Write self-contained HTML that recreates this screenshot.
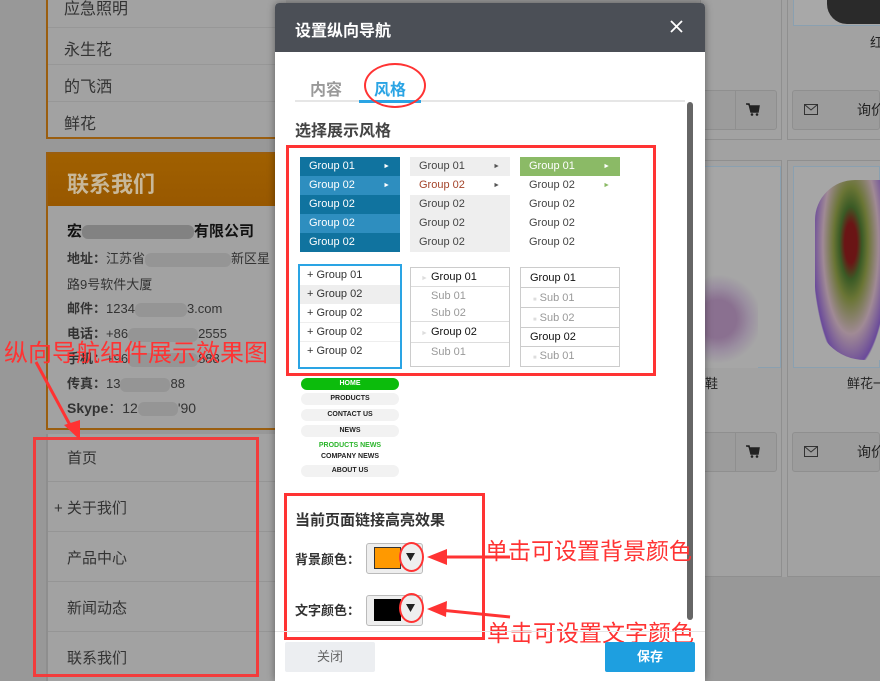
<!DOCTYPE html>
<html><head><meta charset="utf-8"><style>
*{margin:0;padding:0;box-sizing:border-box}
body{width:880px;height:681px;overflow:hidden;position:relative;background:#989898;font-family:"Liberation Sans","Noto Sans CJK SC",sans-serif;}
.a{position:absolute}
.t{position:absolute;white-space:nowrap}
.g{font-size:11px;color:#fff;height:19px;line-height:19px;padding-left:9px;position:relative}
.g i{position:absolute;right:10px;top:0;font-style:normal;font-size:7px}
</style></head><body>
<!-- left background -->
<div class="a" style="left:46px;top:0;width:240px;height:139px;background:#a2a2a2;border-left:2px solid #9a5e10;border-bottom:2px solid #9a5e10"></div>
<div class="a" style="left:48px;top:27px;width:240px;border-top:1px solid #979797"></div>
<div class="a" style="left:48px;top:64px;width:240px;border-top:1px solid #979797"></div>
<div class="a" style="left:48px;top:101px;width:240px;border-top:1px solid #979797"></div>
<div class="t" style="left:64px;top:0;font-size:16px;color:#333;line-height:20px">应急照明</div>
<div class="t" style="left:64px;top:36px;font-size:16px;color:#333">永生花</div>
<div class="t" style="left:64px;top:73px;font-size:16px;color:#333">的飞洒</div>
<div class="t" style="left:64px;top:110px;font-size:16px;color:#333">鲜花</div>

<div class="a" style="left:46px;top:152px;width:240px;height:278px;background:#a2a2a2;border:2px solid #9a5e10;border-right:none"></div>
<div class="a" style="left:48px;top:154px;width:238px;height:52px;background:linear-gradient(#a06000,#985800)"></div>
<div class="t" style="left:67px;top:167px;font-size:22px;color:#c8b89a;font-weight:bold">联系我们</div>
<div class="t" style="left:67px;top:220px;font-size:15px;color:#111;font-weight:bold">宏<span style="display:inline-block;width:112px;height:14px;background:#828282;border-radius:6px;vertical-align:middle"></span>有限公司</div>
<div class="t" style="left:67px;top:248px;font-size:13px;color:#333"><b>地址：</b>江苏省<span style="display:inline-block;width:86px;height:14px;background:#959595;border-radius:6px;vertical-align:middle"></span>新区星</div>
<div class="t" style="left:67px;top:274px;font-size:13px;color:#333">路9号软件大厦</div>
<div class="t" style="left:67px;top:298px;font-size:13px;color:#333"><b>邮件：</b>1234<span style="display:inline-block;width:52px;height:14px;background:#959595;border-radius:6px;vertical-align:middle"></span>3.com</div>
<div class="t" style="left:67px;top:323px;font-size:13px;color:#333"><b>电话：</b>+86<span style="display:inline-block;width:70px;height:14px;background:#959595;border-radius:6px;vertical-align:middle"></span>2555</div>
<div class="t" style="left:67px;top:348px;font-size:13px;color:#333"><b>手机：</b>+96<span style="display:inline-block;width:70px;height:14px;background:#959595;border-radius:6px;vertical-align:middle"></span>888</div>
<div class="t" style="left:67px;top:373px;font-size:13px;color:#333"><b>传真：</b>13<span style="display:inline-block;width:50px;height:14px;background:#959595;border-radius:6px;vertical-align:middle"></span>88</div>
<div class="t" style="left:67px;top:398px;font-size:14px;color:#333"><b>Skype</b>：12<span style="display:inline-block;width:40px;height:14px;background:#959595;border-radius:6px;vertical-align:middle"></span>'90</div>

<div class="a" style="left:46px;top:434px;width:240px;height:247px;background:#a2a2a2;border-left:2px solid #8e8e8e"></div>
<div class="a" style="left:48px;top:481px;width:240px;border-top:1px solid #959595"></div>
<div class="a" style="left:48px;top:531px;width:240px;border-top:1px solid #959595"></div>
<div class="a" style="left:48px;top:581px;width:240px;border-top:1px solid #959595"></div>
<div class="a" style="left:48px;top:631px;width:240px;border-top:1px solid #959595"></div>
<div class="t" style="left:67px;top:447px;font-size:15px;color:#333">首页</div>
<div class="t" style="left:54px;top:497px;font-size:15px;color:#333">+ 关于我们</div>
<div class="t" style="left:67px;top:547px;font-size:15px;color:#333">产品中心</div>
<div class="t" style="left:67px;top:597px;font-size:15px;color:#333">新闻动态</div>
<div class="t" style="left:67px;top:647px;font-size:15px;color:#333">联系我们</div>
<div class="a" style="left:33px;top:437px;width:226px;height:240px;border:3px solid #f23c3c"></div>

<!-- right background -->
<div class="a" style="left:700px;top:0;width:180px;height:577px;background:#a2a2a2"></div>
<div class="a" style="left:700px;top:0;width:82px;height:140px;border:1px solid #8f8f8f;border-top:none"></div>
<div class="a" style="left:787px;top:0;width:93px;height:140px;border:1px solid #8f8f8f;border-top:none;border-right:none"></div>
<div class="a" style="left:793px;top:0;width:87px;height:26px;border:1px solid #8aa0b0;border-top:none;border-right:none;background:#a8a8a8"></div>
<div class="a" style="left:827px;top:0;width:53px;height:24px;background:#2a2a2a;border-radius:0 0 0 20px"></div>
<div class="a" style="left:700px;top:90px;width:77px;height:40px;border:1px solid #8f8f8f;border-radius:3px;background:#9c9c9c"></div>
<div class="a" style="left:735px;top:90px;border-left:1px solid #8f8f8f;height:40px"></div>
<svg class="a" style="left:746px;top:103px" width="14" height="13"><path d="M0 1H3L5 9H12L13 3H4" fill="#222" stroke="#222" stroke-width="1.5"/><circle cx="6" cy="11.5" r="1.3" fill="#222"/><circle cx="11" cy="11.5" r="1.3" fill="#222"/></svg>
<div class="a" style="left:792px;top:90px;width:88px;height:40px;border:1px solid #8f8f8f;border-radius:3px;background:#9c9c9c"></div>
<svg class="a" style="left:804px;top:104px" width="14" height="11"><rect x="0.5" y="0.5" width="13" height="10" fill="none" stroke="#333"/><path d="M0.5 0.5L7 6L13.5 0.5" fill="none" stroke="#333"/></svg>
<div class="t" style="left:857px;top:100px;font-size:14px;color:#222">询价</div>
<div class="t" style="left:870px;top:32px;font-size:13px;color:#222">红</div>
<div class="a" style="left:700px;top:160px;width:82px;height:417px;border:1px solid #8f8f8f"></div>
<div class="a" style="left:787px;top:160px;width:93px;height:417px;border:1px solid #8f8f8f;border-right:none"></div>
<div class="a" style="left:700px;top:166px;width:81px;height:202px;border:1px solid #8aa0b0;background:#a6a6a6"></div>
<div class="a" style="left:793px;top:166px;width:87px;height:202px;border:1px solid #8aa0b0;background:#a6a6a6"></div>
<div class="a" style="left:815px;top:180px;width:65px;height:180px;border-radius:40px 0 0 50px;background:radial-gradient(ellipse at 55% 35%,#6a1515 0 12%,#3a5a25 22%,#6a7535 34%,#a08a95 55%,#6a4a9a 75%,#a6a6a6 77%)"></div>
<div class="a" style="left:700px;top:270px;width:58px;height:98px;border-radius:30px 40px 0 0;background:radial-gradient(circle at 30% 50%,#8a7090 0 30%,#9a8ea0 50%,#a6a6a6 70%)"></div>
<div class="t" style="left:705px;top:373px;font-size:13px;color:#222">鞋</div>
<div class="t" style="left:847px;top:373px;font-size:13px;color:#222">鲜花一</div>
<div class="a" style="left:700px;top:432px;width:77px;height:40px;border:1px solid #8f8f8f;border-radius:3px;background:#9c9c9c"></div>
<div class="a" style="left:735px;top:432px;border-left:1px solid #8f8f8f;height:40px"></div>
<svg class="a" style="left:746px;top:445px" width="14" height="13"><path d="M0 1H3L5 9H12L13 3H4" fill="#222" stroke="#222" stroke-width="1.5"/><circle cx="6" cy="11.5" r="1.3" fill="#222"/><circle cx="11" cy="11.5" r="1.3" fill="#222"/></svg>
<div class="a" style="left:792px;top:432px;width:88px;height:40px;border:1px solid #8f8f8f;border-radius:3px;background:#9c9c9c"></div>
<svg class="a" style="left:804px;top:446px" width="14" height="11"><rect x="0.5" y="0.5" width="13" height="10" fill="none" stroke="#333"/><path d="M0.5 0.5L7 6L13.5 0.5" fill="none" stroke="#333"/></svg>
<div class="t" style="left:857px;top:442px;font-size:14px;color:#222">询价</div>

<!-- red annotation left -->
<div class="t" style="left:4px;top:333px;font-size:24px;color:#f33">纵向导航组件展示效果图</div>
<svg class="a" style="left:0;top:0" width="880" height="681"><line x1="36" y1="362" x2="70" y2="425" stroke="#f33" stroke-width="3"/><polygon points="64,425 80,440 80,420" fill="#f33"/></svg>

<!-- modal -->
<div class="a" style="left:275px;top:3px;width:430px;height:678px;background:#fff;border-radius:4px 4px 0 0;box-shadow:0 0 8px rgba(0,0,0,.4)"></div>
<div class="a" style="left:275px;top:3px;width:430px;height:49px;background:#4b4f56;border-radius:4px 4px 0 0"></div>
<div class="t" style="left:295px;top:17px;font-size:16px;color:#fff;font-weight:bold">设置纵向导航</div>
<svg class="a" style="left:670px;top:20px" width="13" height="13"><path d="M1 1L12 12M12 1L1 12" stroke="#fff" stroke-width="1.8"/></svg>
<div class="t" style="left:310px;top:76px;font-size:16px;color:#999;font-weight:bold">内容</div>
<div class="t" style="left:374px;top:76px;font-size:16px;color:#2aa4e4;font-weight:bold">风格</div>
<div class="a" style="left:295px;top:100px;width:390px;border-top:2px solid #e6e6e6"></div>
<div class="a" style="left:359px;top:100px;width:62px;border-top:3px solid #2aa4e4"></div>
<div class="a" style="left:364px;top:63px;width:62px;height:45px;border:2px solid #f33;border-radius:50%"></div>
<div class="a" style="left:687px;top:102px;width:6px;height:518px;background:#666;border-radius:3px"></div>
<div class="t" style="left:295px;top:117px;font-size:16px;color:#444;font-weight:bold">选择展示风格</div>
<div class="a" style="left:286px;top:145px;width:370px;height:231px;border:3px solid #f33"></div>

<div class="a" style="left:300px;top:157px;width:100px">
<div class="g" style="background:#10739f">Group 01<i>►</i></div>
<div class="g" style="background:#2e8ebf">Group 02<i>►</i></div>
<div class="g" style="background:#10739f">Group 02</div>
<div class="g" style="background:#2e8ebf">Group 02</div>
<div class="g" style="background:#10739f">Group 02</div></div>
<div class="a" style="left:410px;top:157px;width:100px">
<div class="g" style="background:#eee;color:#444">Group 01<i style="color:#555">►</i></div>
<div class="g" style="background:#fff;color:#a4442a">Group 02<i style="color:#555">►</i></div>
<div class="g" style="background:#eee;color:#444">Group 02</div>
<div class="g" style="background:#eee;color:#444">Group 02</div>
<div class="g" style="background:#eee;color:#444">Group 02</div></div>
<div class="a" style="left:520px;top:157px;width:100px">
<div class="g" style="background:#8bba66">Group 01<i>►</i></div>
<div class="g" style="color:#444">Group 02<i style="color:#8bba66">►</i></div>
<div class="g" style="color:#444">Group 02</div>
<div class="g" style="color:#444">Group 02</div>
<div class="g" style="color:#444">Group 02</div></div>

<div class="a" style="left:298px;top:264px;width:104px;height:105px;border:2px solid #2aa4e4">
<div class="g" style="color:#333;padding-left:7px">+ Group 01</div>
<div class="g" style="color:#333;padding-left:7px;background:#eee">+ Group 02</div>
<div class="g" style="color:#333;padding-left:7px;border-bottom:1px solid #eee">+ Group 02</div>
<div class="g" style="color:#333;padding-left:7px;border-bottom:1px solid #eee">+ Group 02</div>
<div class="g" style="color:#333;padding-left:7px">+ Group 02</div></div>
<div class="a" style="left:410px;top:267px;width:100px;height:100px;border:1px solid #ccc;font-size:11px">
<div style="height:19px;line-height:19px;padding-left:10px;color:#111;border-bottom:1px solid #ddd"><span style="color:#ddd;font-size:7px">►</span> Group 01</div>
<div style="height:17px;line-height:17px;padding-left:20px;color:#999;margin-top:1px">Sub 01</div>
<div style="height:17px;line-height:17px;padding-left:20px;color:#999;border-bottom:1px solid #ddd">Sub 02</div>
<div style="height:21px;line-height:21px;padding-left:10px;color:#111;border-bottom:1px solid #ddd"><span style="color:#ddd;font-size:7px">►</span> Group 02</div>
<div style="height:19px;line-height:19px;padding-left:20px;color:#999">Sub 01</div></div>
<div class="a" style="left:520px;top:267px;width:100px;height:100px;border:1px solid #ccc;font-size:11px">
<div style="height:20px;line-height:20px;padding-left:9px;color:#111;border-bottom:1px solid #ccc">Group 01</div>
<div style="height:20px;line-height:20px;padding-left:12px;color:#999;border-bottom:1px solid #ccc"><span style="color:#ddd;font-size:6px">■</span> Sub 01</div>
<div style="height:20px;line-height:20px;padding-left:12px;color:#999;border-bottom:1px solid #ccc"><span style="color:#ddd;font-size:6px">■</span> Sub 02</div>
<div style="height:19px;line-height:19px;padding-left:9px;color:#111;border-bottom:1px solid #ccc">Group 02</div>
<div style="height:18px;line-height:18px;padding-left:12px;color:#999"><span style="color:#ddd;font-size:6px">■</span> Sub 01</div></div>

<div class="a" style="left:301px;top:378px;width:98px;font-size:7px;font-weight:bold;text-align:center;color:#222">
<div style="height:12px;line-height:12px;background:#0cbc0c;color:#fff;border-radius:6px">HOME</div>
<div style="height:12px;line-height:12px;background:#f2f2f2;border-radius:6px;margin-top:3px">PRODUCTS</div>
<div style="height:12px;line-height:12px;background:#f2f2f2;border-radius:6px;margin-top:4px">CONTACT US</div>
<div style="height:12px;line-height:12px;background:#f2f2f2;border-radius:6px;margin-top:4px">NEWS</div>
<div style="height:11px;line-height:11px;color:#2bb52b;margin-top:3px">PRODUCTS NEWS</div>
<div style="height:11px;line-height:11px">COMPANY NEWS</div>
<div style="height:12px;line-height:12px;background:#f2f2f2;border-radius:6px;margin-top:3px">ABOUT US</div></div>

<div class="a" style="left:284px;top:493px;width:201px;height:147px;border:3px solid #f33"></div>
<div class="t" style="left:295px;top:509px;font-size:15px;color:#333;font-weight:bold">当前页面链接高亮效果</div>
<div class="t" style="left:295px;top:549px;font-size:13px;color:#333;font-weight:bold">背景颜色：</div>
<div class="a" style="left:366px;top:543px;width:57px;height:31px;border:1px solid #bbb;border-radius:3px;background:#eee"></div>
<div class="a" style="left:374px;top:547px;width:27px;height:22px;background:#f90;border:1px solid #333"></div>
<svg class="a" style="left:406px;top:553px" width="9" height="8"><path d="M0 0H9L4.5 8Z" fill="#222"/></svg>
<div class="a" style="left:399px;top:542px;width:25px;height:30px;border:2px solid #f33;border-radius:50%"></div>
<div class="t" style="left:295px;top:600px;font-size:13px;color:#333;font-weight:bold">文字颜色：</div>
<div class="a" style="left:366px;top:595px;width:57px;height:31px;border:1px solid #bbb;border-radius:3px;background:#eee"></div>
<div class="a" style="left:374px;top:599px;width:27px;height:22px;background:#000"></div>
<svg class="a" style="left:406px;top:604px" width="9" height="8"><path d="M0 0H9L4.5 8Z" fill="#222"/></svg>
<div class="a" style="left:399px;top:593px;width:25px;height:30px;border:2px solid #f33;border-radius:50%"></div>
<svg class="a" style="left:0;top:0" width="880" height="681"><line x1="510" y1="557" x2="440" y2="557" stroke="#f33" stroke-width="3"/><polygon points="427,557 447,549 447,565" fill="#f33"/><line x1="510" y1="617" x2="440" y2="610" stroke="#f33" stroke-width="3"/><polygon points="427,609 447,601 446,617" fill="#f33"/></svg>
<div class="t" style="left:485px;top:532px;font-size:23px;color:#f33">单击可设置背景颜色</div>
<div class="t" style="left:487px;top:614px;font-size:23px;color:#f33">单击可设置文字颜色</div>

<div class="a" style="left:275px;top:631px;width:430px;border-top:1px solid #e5e5e5"></div>
<div class="a" style="left:285px;top:642px;width:90px;height:30px;background:#eceef1;border-radius:2px;color:#666;font-size:13px;text-align:center;line-height:30px">关闭</div>
<div class="a" style="left:605px;top:642px;width:90px;height:30px;background:#1e9fe0;border-radius:2px;color:#fff;font-size:13px;font-weight:bold;text-align:center;line-height:30px">保存</div>
</body></html>
